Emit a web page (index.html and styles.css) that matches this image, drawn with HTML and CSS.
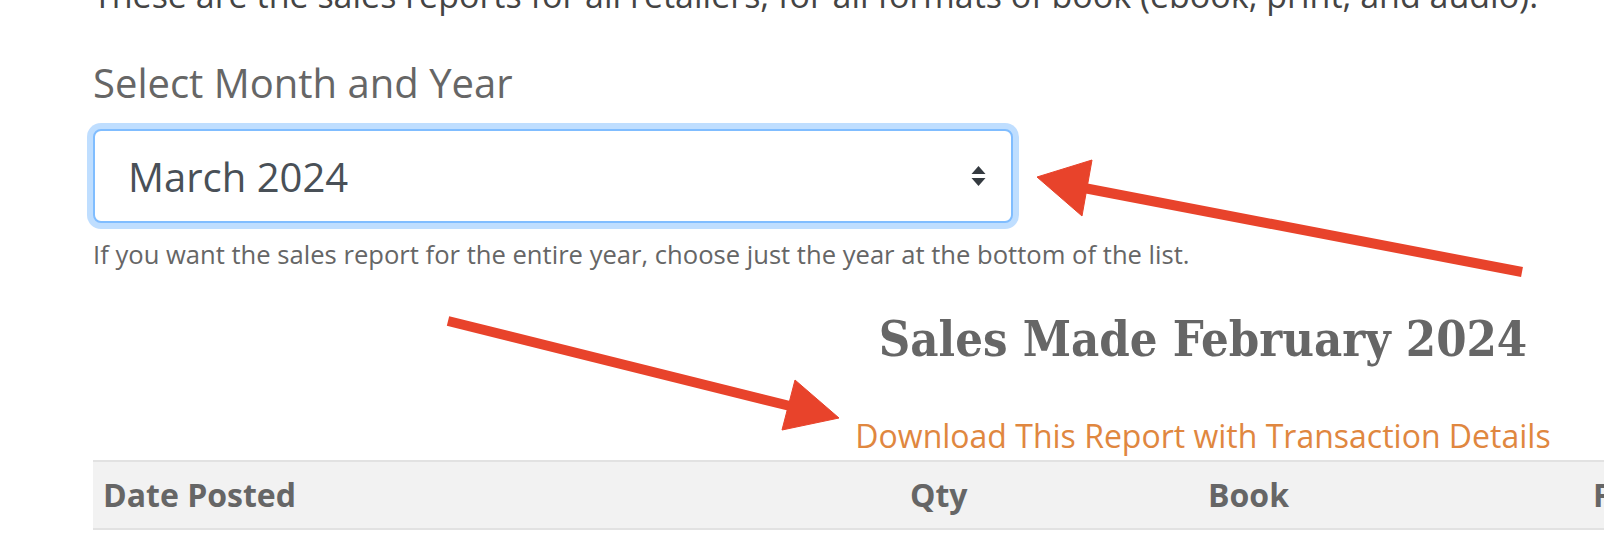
FILE: index.html
```html
<!DOCTYPE html>
<html lang="en">
<head>
    <meta charset="UTF-8">
    <meta name="viewport" content="width=device-width, initial-scale=1.0">
    <title>Sales Reports</title>
    <link rel="stylesheet" href="styles.css">
</head>
<body>
    <div class="page">
        <p class="intro">These are the sales reports for all retailers, for all formats of book (ebook, print, and audio).</p>

        <form class="report-form">
            <label class="form-label" for="report-month">Select Month and Year</label>
            <div class="select-wrap">
                <select id="report-month" class="form-select">
                    <option>February 2024</option>
                    <option selected>March 2024</option>
                    <option>April 2024</option>
                    <option>2024</option>
                    <option>2023</option>
                </select>
                <svg class="select-caret" width="17" height="24" viewBox="0 0 17 24">
                    <path d="M8.5 2 L15.5 10 H1.5 Z M8.5 22 L1.5 14 H15.5 Z" fill="#343a40"/>
                </svg>
            </div>
            <small class="form-help">If you want the sales report for the entire year, choose just the year at the bottom of the list.</small>
        </form>

        <section class="report">
            <h2 class="report-title">Sales Made February 2024</h2>
            <a class="report-download" href="#">Download This Report with Transaction Details</a>

            <table class="report-table">
                <colgroup>
                    <col class="col-date">
                    <col class="col-qty">
                    <col class="col-book">
                    <col>
                </colgroup>
                <thead>
                    <tr>
                        <th>Date Posted</th>
                        <th>Qty</th>
                        <th>Book</th>
                        <th>Format</th>
                    </tr>
                </thead>
            </table>
        </section>
    </div>

    <!-- annotation arrows drawn over the page -->
    <svg class="annotations" width="1604" height="534" viewBox="0 0 1604 534">
        <g fill="#e8432b" stroke="#e8432b">
            <line x1="1522" y1="272" x2="1084" y2="188" stroke-width="10"/>
            <polygon points="1037,177 1092,160 1082,216" stroke-width="1"/>
            <line x1="448" y1="321" x2="794" y2="407" stroke-width="10"/>
            <polygon points="839,418 795,380 782,430" stroke-width="1"/>
        </g>
    </svg>
</body>
</html>
```

FILE: styles.css
```css
body {
    margin: 0;
    padding: 0;
    font-family: "Open Sans", "Liberation Sans", sans-serif;
    color: #666;
    background-color: #fff;
    overflow: hidden;
}

.page {
    display: flow-root;
    width: 2220px;
    padding-left: 93px;
}

.intro {
    margin: -30px 0 0;
    font-size: 34px;
    line-height: 1.5;
    color: #444;
}

.report-form {
    display: flex;
    flex-direction: column;
    align-items: flex-start;
}

.form-label {
    display: block;
    margin-top: 38px;
    margin-bottom: 22px;
    font-size: 40px;
    line-height: 1.2;
    color: #666;
}

.select-wrap {
    position: relative;
    width: 920px;
}

.form-select {
    display: block;
    width: 100%;
    height: 94px;
    box-sizing: border-box;
    padding: 0 60px 0 33px;
    font-family: inherit;
    font-size: 40px;
    color: #495057;
    background-color: #fff;
    border: 2px solid #80bdff;
    border-radius: 8px;
    box-shadow: 0 0 0 6px rgba(0, 123, 255, 0.25);
    outline: none;
    -webkit-appearance: none;
    appearance: none;
}

.select-caret {
    position: absolute;
    right: 26px;
    top: 35px;
    pointer-events: none;
}

.form-help {
    display: block;
    margin-top: 13px;
    font-size: 25.6px;
    line-height: 1.5;
    color: #666;
}

.report {
    display: flex;
    flex-direction: column;
    align-items: center;
}

.report-title {
    margin: 36px 0 0;
    font-family: "DejaVu Serif Condensed", "DejaVu Serif", serif;
    font-weight: bold;
    font-size: 48.5px;
    line-height: 1.2;
    color: #666;
}

.report-download {
    margin-top: 43px;
    font-size: 32px;
    line-height: 1.5;
    color: #e0873f;
    text-decoration: none;
}

.report-table {
    width: 100%;
    table-layout: fixed;
    border-collapse: collapse;
    font-size: 32px;
}

.report-table .col-date {
    width: 807px;
}

.report-table .col-qty {
    width: 298px;
}

.report-table .col-book {
    width: 385px;
}

.report-table th {
    padding: 9px 10px 9px;
    text-align: left;
    font-weight: bold;
    line-height: 1.5;
    color: #666;
    background-color: #f2f2f2;
    border-top: 2px solid #e2e2e2;
    border-bottom: 2px solid #e2e2e2;
}

.annotations {
    position: absolute;
    top: 0;
    left: 0;
    pointer-events: none;
}
```
